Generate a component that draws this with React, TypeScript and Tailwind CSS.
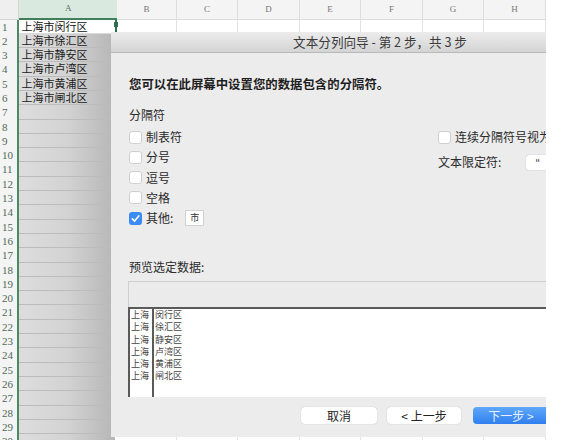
import React from 'react'

const ui = { fontFamily: '"Noto Sans CJK SC", "Noto Sans", sans-serif' }
const serif = { fontFamily: '"Liberation Serif", "Noto Sans CJK SC", serif' }

const districts = ['上海市闵行区', '上海市徐汇区', '上海市静安区', '上海市卢湾区', '上海市黄浦区', '上海市闸北区']
const split = ['闵行区', '徐汇区', '静安区', '卢湾区', '黄浦区', '闸北区']

const cols = [
  { l: 'B', w: 60 },
  { l: 'C', w: 61 },
  { l: 'D', w: 62 },
  { l: 'E', w: 61 },
  { l: 'F', w: 62 },
  { l: 'G', w: 61 },
  { l: 'H', w: 62 },
]

function Checkbox({ checked }: { checked?: boolean }) {
  if (checked) {
    return (
      <div className="w-[13px] h-[13px] rounded-[3px] bg-[#3a8cf4] flex items-center justify-center shrink-0">
        <svg width="11" height="11" viewBox="0 0 12 12">
          <path d="M2.6 6.4 L5 8.8 L9.6 3.2" stroke="white" strokeWidth="1.8" fill="none" strokeLinecap="round" strokeLinejoin="round" />
        </svg>
      </div>
    )
  }
  return <div className="w-[13px] h-[13px] rounded-[3px] bg-white border border-[#cfcfcf] shrink-0" />
}

function Sheet() {
  const rows = Array.from({ length: 30 }, (_, i) => i + 1)
  return (
    <div className="flex flex-col bg-white">
      {/* column headers */}
      <div className="flex h-[19.5px] bg-[#f4f4f4]">
        <div className="w-[20px] border-r border-b border-[#d6d6d6] bg-[#efefef]" />
        <div
          className="w-[101px] flex items-center justify-center bg-[#d9e9df] border-b-2 border-[#3f7f5a] text-[9px] text-[#5e6e64]"
          style={serif}
        >
          A
        </div>
        {cols.map((c) => (
          <div
            key={c.l}
            className="flex items-center justify-center border-r border-b border-[#dcdcdc] text-[9px] text-[#777] shrink-0"
            style={{ width: c.w, ...serif }}
          >
            {c.l}
          </div>
        ))}
      </div>
      {rows.map((r) => (
        <div key={r} className="flex h-[14.3px]">
          <div
            className="w-[20px] pl-[2px] bg-[#f3f4f3] border-r-2 border-[#4c8a66] text-[11px] leading-[14.3px] text-[#4f6a5a]"
            style={serif}
          >
            {r}
          </div>
          {r === 1 ? (
            <div className="w-[99px] relative bg-white border-b border-[#dadada] pl-[2px] text-[11px] leading-[14px] text-[#111]" style={serif}>
              {districts[0]}
              <div className="absolute right-[-2px] top-0 bottom-[-1px] w-[2px] bg-[#2f6e4a]" />
              <div className="absolute right-[-3px] top-[2px] w-[4px] h-[5px] bg-[#2f6e4a]" />
            </div>
          ) : (
            <div
              className="w-[99px] bg-linear-to-r from-[#dddddd] via-[#d3d3d3] to-[#b6b6b6] border-b border-[#bcbcbc] pl-[2px] text-[11px] leading-[14px] text-[#1a1a1a]"
              style={serif}
            >
              {districts[r - 1] ?? ''}
            </div>
          )}
          <div className="w-[2px]" />
          {cols.map((c) => (
            <div key={c.l} className="border-r border-b border-[#e3e3e3] shrink-0" style={{ width: c.w }} />
          ))}
        </div>
      ))}
    </div>
  )
}

function Dialog() {
  return (
    <div className="absolute left-[111px] top-[32px] w-[538px] h-[405px] bg-[#ececec] flex flex-col" style={ui}>
      <div className="h-[21px] bg-linear-to-b from-[#ececec] to-[#d4d4d4] border-b border-[#b9b9b9] flex items-center justify-center text-[12.6px] text-[#3a3a3a]">
        文本分列向导 - 第 2 步，共 3 步
      </div>
      <div className="flex flex-col pl-[18px]">
        <div className="mt-[23px] h-[16px] leading-[16px] text-[12.4px] font-bold text-[#1e1e1e]">
          您可以在此屏幕中设置您的数据包含的分隔符。
        </div>
        <div className="mt-[15px] h-[16px] leading-[16px] text-[12px] text-[#2a2a2a]">分隔符</div>
        <div className="mt-[4px] flex">
          <div className="w-[309px] flex flex-col">
            {['制表符', '分号', '逗号', '空格'].map((t) => (
              <div key={t} className="h-[20.25px] flex items-center gap-[4px] text-[12px] text-[#2a2a2a]">
                <Checkbox />
                <span>{t}</span>
              </div>
            ))}
            <div className="h-[20.25px] flex items-center gap-[4px] text-[12px] text-[#2a2a2a]">
              <Checkbox checked />
              <span>其他:</span>
              <div className="ml-[8px] w-[19px] h-[16px] bg-white border border-[#d2d2d2] flex items-center justify-center text-[9px] text-[#333]">
                市
              </div>
            </div>
          </div>
          <div className="flex flex-col">
            <div className="h-[20px] flex items-center gap-[4px] text-[12px] text-[#2a2a2a] whitespace-nowrap">
              <Checkbox />
              <span>连续分隔符号视为单个处理</span>
            </div>
            <div className="mt-[5px] h-[20px] flex items-center text-[12px] text-[#2a2a2a] whitespace-nowrap">
              <span>文本限定符:</span>
              <div className="ml-[25px] w-[70px] h-[15px] bg-white rounded-[3px] shadow-[0_0_1px_rgba(0,0,0,0.35)] pl-[9px] text-[10px] leading-[15px] text-[#333]">
                "
              </div>
            </div>
          </div>
        </div>
        <div className="mt-[31px] h-[16px] leading-[16px] text-[12px] text-[#2a2a2a]">预览选定数据:</div>
        <div className="mt-[6px] ml-[-1px] w-[500px] flex flex-col">
          <div className="h-[26px] bg-[#ebebeb] border-t border-l border-[#cfcfcf]" />
          <div className="h-[90px] bg-white border-t-2 border-l-2 border-[#5a5a5a] flex">
            <div className="w-[24px] border-r-2 border-[#5a5a5a] flex flex-col pl-[1px]">
              {split.map((s) => (
                <div key={s} className="h-[12.2px] leading-[12px] text-[9px] text-[#444]">
                  上海
                </div>
              ))}
            </div>
            <div className="flex flex-col pl-[1px]">
              {split.map((s) => (
                <div key={s} className="h-[12.2px] leading-[12px] text-[9px] text-[#444]">
                  {s}
                </div>
              ))}
            </div>
          </div>
        </div>
        <div className="mt-[10px] ml-[172px] flex items-center">
          <div className="w-[76px] h-[17px] bg-white rounded-[4px] shadow-[0_0_1px_rgba(0,0,0,0.3)] flex items-center justify-center text-[12px] text-[#222]">
            取消
          </div>
          <div className="ml-[10px] w-[74px] h-[17px] bg-white rounded-[4px] shadow-[0_0_1px_rgba(0,0,0,0.3)] flex items-center justify-center text-[12px] text-[#222]">
            &lt; 上一步
          </div>
          <div className="ml-[12px] w-[76px] h-[17px] rounded-[4px] bg-linear-to-b from-[#5ea8f9] to-[#2f7fef] flex items-center justify-center text-[12px] text-[#e6f0ff]">
            下一步 &gt;
          </div>
        </div>
      </div>
    </div>
  )
}

export default function App() {
  return (
    <div className="w-[565px] h-[440px] bg-white flex overflow-hidden">
      <div className="relative w-[546px] h-[440px] overflow-hidden shrink-0">
        <Sheet />
        <Dialog />
      </div>
    </div>
  )
}
